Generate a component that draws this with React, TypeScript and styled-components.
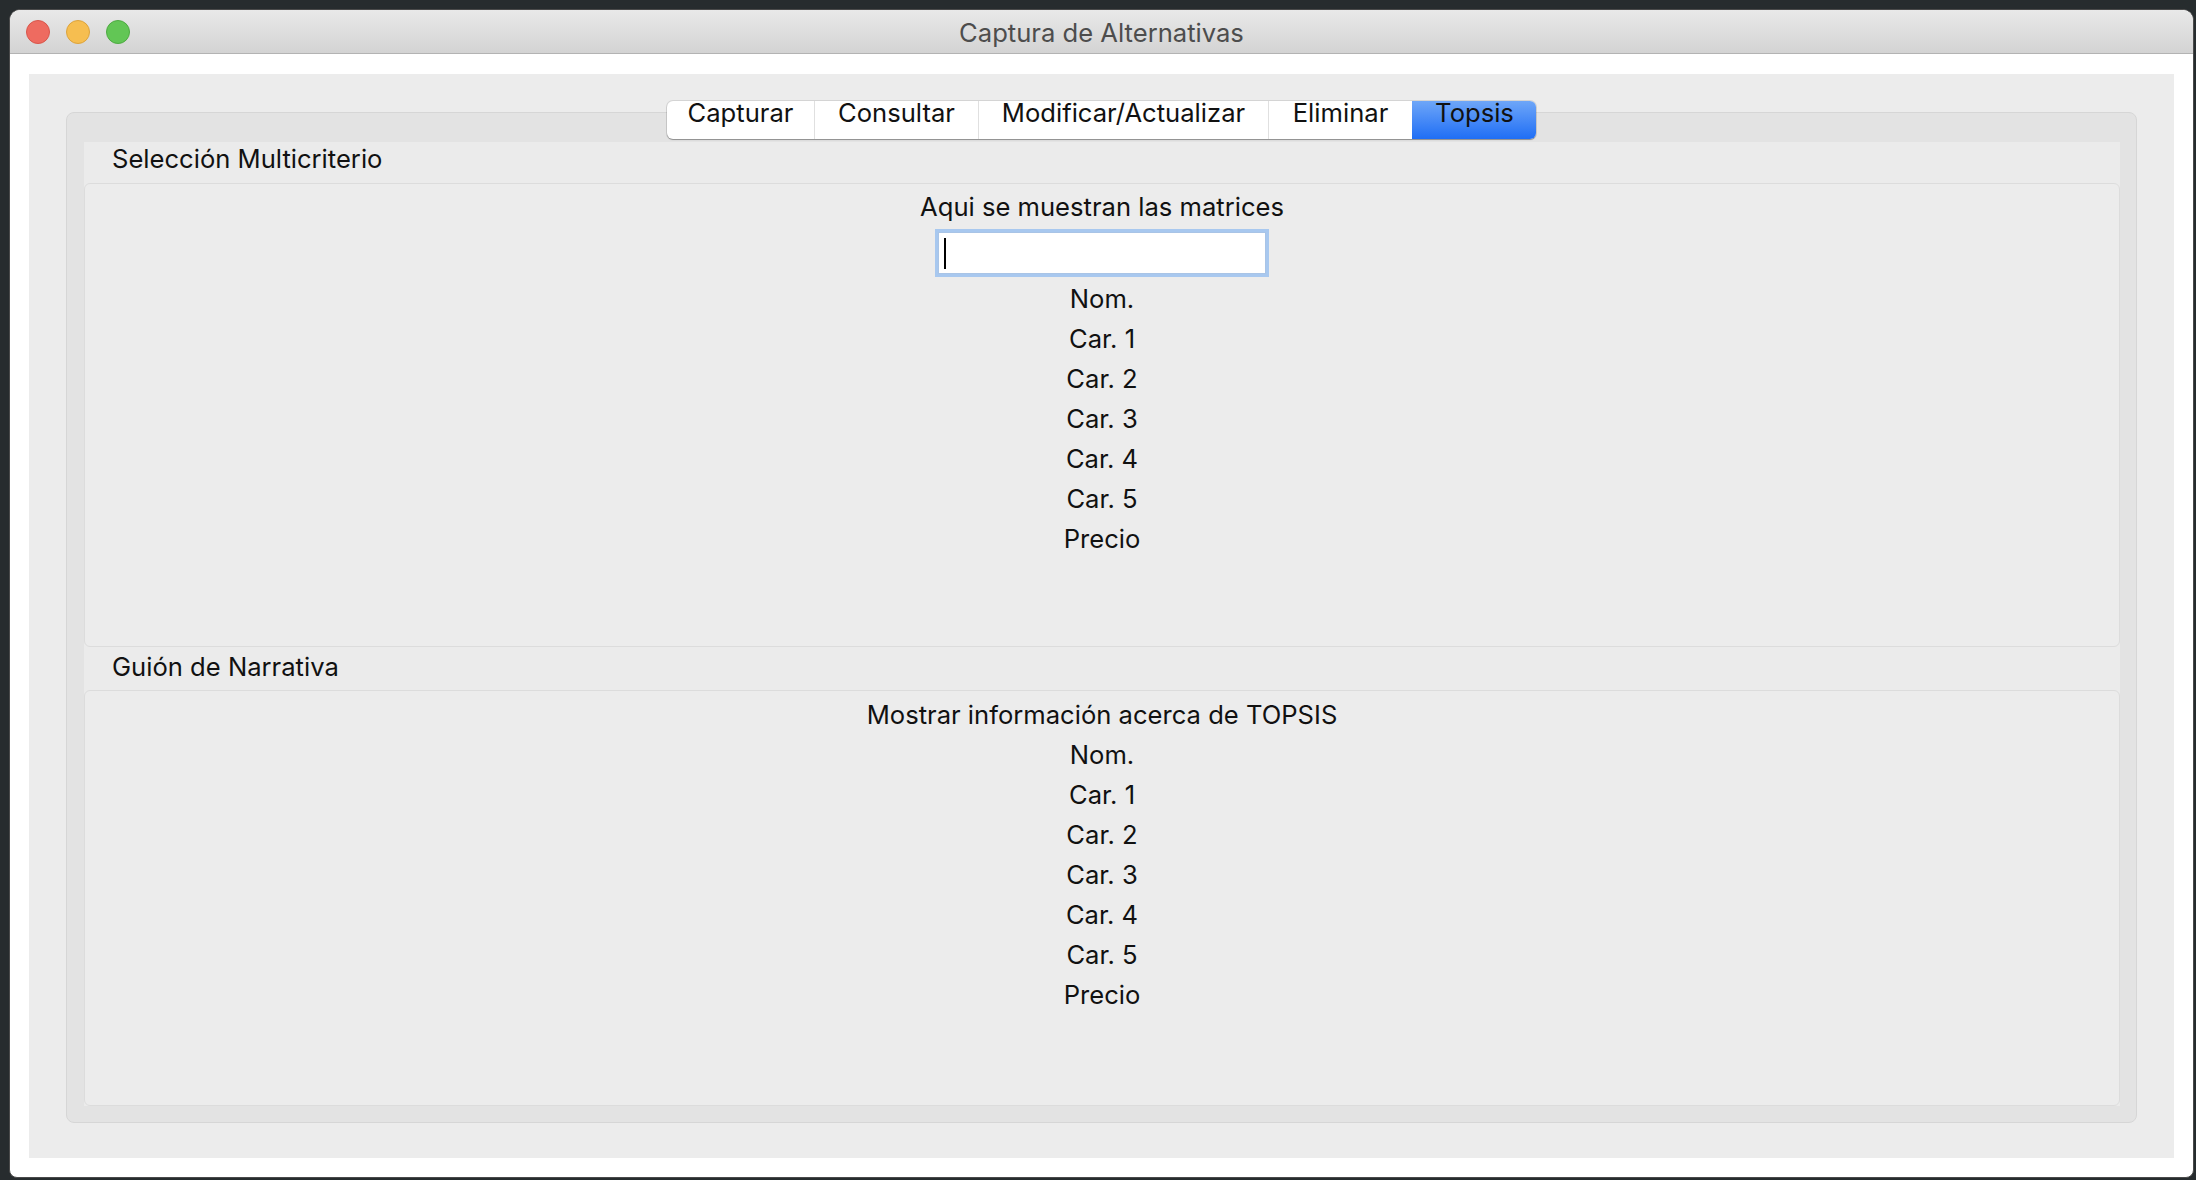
import styled, { createGlobalStyle } from 'styled-components'

const GlobalStyle = createGlobalStyle`
  html, body {
    margin: 0;
    padding: 0;
    background: #272c2e;
  }
  body {
    font-family: Inter, "Noto Sans", "Liberation Sans", sans-serif;
    color: #111;
  }
  * {
    box-sizing: border-box;
  }
`

const Desktop = styled.div`
  width: 2196px;
  height: 1180px;
  padding: 9px 2px 2px 9px;
  display: flex;
`

const Window = styled.div`
  flex: 1;
  display: flex;
  flex-direction: column;
  background: #fff;
  border: 1px solid #4a4a4a;
  border-radius: 11px 11px 8px 8px;
  overflow: hidden;
`

const TitleBar = styled.div`
  height: 44px;
  flex-shrink: 0;
  display: grid;
  grid-template-columns: 1fr auto 1fr;
  align-items: center;
  background: linear-gradient(#e9e9e9, #d3d3d3);
  border-bottom: 1px solid #b3b3b3;
  padding: 0 16px;
`

const Lights = styled.div`
  display: flex;
  gap: 16px;
`

const Light = styled.span<{ $fill: string; $edge: string }>`
  width: 24px;
  height: 24px;
  border-radius: 50%;
  background: ${p => p.$fill};
  border: 1px solid ${p => p.$edge};
`

const WindowTitle = styled.div`
  font-size: 25.6px;
  color: #4d4d4d;
  padding-top: 2px;
`

const Content = styled.div`
  flex: 1;
  display: flex;
  padding: 20px 19px 19px 19px;
`

const Panel = styled.div`
  flex: 1;
  display: flex;
  flex-direction: column;
  background: #ececec;
  padding: 27px 37px 35px 37px;
`

const TabStrip = styled.div`
  align-self: center;
  display: flex;
  height: 38px;
  position: relative;
  z-index: 1;
  margin-bottom: -27px;
  background: #fff;
  border-radius: 6px;
  box-shadow: 0 0 0 1px rgba(0, 0, 0, 0.1), 0 1px 1px rgba(0, 0, 0, 0.3);
`

const Tab = styled.div<{ $width: number; $active?: boolean }>`
  width: ${p => p.$width}px;
  display: flex;
  justify-content: center;
  font-size: 25.6px;
  line-height: 23px;
  color: #111;
  &:not(:first-child) {
    border-left: 1px solid #e0e0e0;
  }
  ${p => p.$active && `
    background: linear-gradient(#6ea6f8, #1f6ef5);
    border-radius: 0 6px 6px 0;
    border-left-color: transparent !important;
  `}
`

const Pane = styled.div`
  flex: 1;
  display: flex;
  flex-direction: column;
  background: #e3e3e3;
  border: 1px solid #d6d6d6;
  border-radius: 8px;
  padding: 29px 16px 16px 17px;
`

const Inner = styled.div`
  flex: 1;
  display: flex;
  flex-direction: column;
  background: #ebebeb;
`

const SectionHeader = styled.div<{ $height: number; $lift: number }>`
  height: ${p => p.$height}px;
  flex-shrink: 0;
  display: flex;
  align-items: center;
  padding: 0 0 ${p => p.$lift}px 28px;
  font-size: 25.6px;
`

const Box = styled.div<{ $height?: number; $top: number }>`
  ${p => (p.$height ? `height: ${p.$height}px; flex-shrink: 0;` : 'flex: 1;')}
  display: flex;
  flex-direction: column;
  align-items: center;
  padding-top: ${p => p.$top}px;
  background: #ececec;
  border: 1px solid #dcdcdc;
  border-radius: 6px;
`

const Caption = styled.div`
  font-size: 25.6px;
  line-height: 40px;
  height: 40px;
  white-space: nowrap;
`

const Field = styled.div`
  width: 328px;
  height: 42px;
  margin: 5px 0;
  position: relative;
  background: #fff;
  border: 1px solid #a9c4e6;
  box-shadow: 0 0 0 3px #a8c8ef;
`

const Caret = styled.span`
  position: absolute;
  left: 5px;
  top: 5px;
  width: 2px;
  height: 31px;
  background: #000;
`

const tabs = [
  { label: 'Capturar', width: 147 },
  { label: 'Consultar', width: 164 },
  { label: 'Modificar/Actualizar', width: 290 },
  { label: 'Eliminar', width: 144 },
  { label: 'Topsis', width: 124, active: true },
]

const rows = ['Nom.', 'Car. 1', 'Car. 2', 'Car. 3', 'Car. 4', 'Car. 5', 'Precio']

export default function App() {
  return (
    <>
      <GlobalStyle />
      <Desktop>
        <Window>
          <TitleBar>
            <Lights>
              <Light $fill="#ee6b60" $edge="#d8564b" />
              <Light $fill="#f6be50" $edge="#dca33c" />
              <Light $fill="#62c655" $edge="#4eaa42" />
            </Lights>
            <WindowTitle>Captura de Alternativas</WindowTitle>
            <div />
          </TitleBar>
          <Content>
            <Panel>
              <TabStrip>
                {tabs.map(t => (
                  <Tab key={t.label} $width={t.width} $active={t.active}>
                    {t.label}
                  </Tab>
                ))}
              </TabStrip>
              <Pane>
                <Inner>
                  <SectionHeader $height={41} $lift={8}>Selección Multicriterio</SectionHeader>
                  <Box $height={464} $top={3}>
                    <Caption>Aqui se muestran las matrices</Caption>
                    <Field>
                      <Caret />
                    </Field>
                    {rows.map(r => (
                      <Caption key={r}>{r}</Caption>
                    ))}
                  </Box>
                  <SectionHeader $height={43} $lift={4}>Guión de Narrativa</SectionHeader>
                  <Box $top={4}>
                    <Caption>Mostrar información acerca de TOPSIS</Caption>
                    {rows.map(r => (
                      <Caption key={r}>{r}</Caption>
                    ))}
                  </Box>
                </Inner>
              </Pane>
            </Panel>
          </Content>
        </Window>
      </Desktop>
    </>
  )
}
